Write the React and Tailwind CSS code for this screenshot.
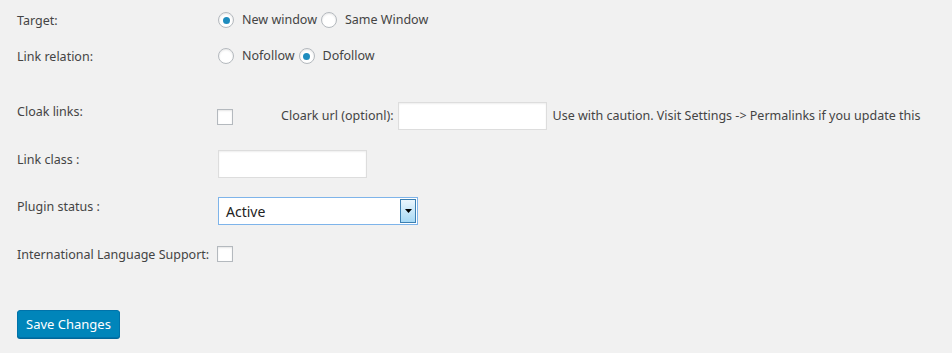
import React from 'react';

const Radio = ({ checked }) => (
  <span className="inline-flex h-4 w-4 items-center justify-center rounded-full border border-[#b4b9be] bg-white shadow-[inset_0_1px_2px_rgba(0,0,0,0.1)]">
    {checked && <span className="h-[7px] w-[7px] rounded-full bg-[#1e8cbe]" />}
  </span>
);

const Checkbox = ({ className = '' }) => (
  <span className={`inline-block h-4 w-4 border border-[#b4b9be] bg-white shadow-[inset_0_1px_2px_rgba(0,0,0,0.1)] ${className}`} />
);

const TextInput = ({ className = '' }) => (
  <div className={`h-[28px] w-[149px] border border-[#ddd] bg-white shadow-[inset_0_1px_2px_rgba(0,0,0,0.07)] ${className}`} />
);

const Row = ({ label, className = '', children }) => (
  <div className={`flex ${className}`}>
    <div className="w-[201px] shrink-0 pt-[1px] leading-[18px]">{label}</div>
    <div className="flex items-center">{children}</div>
  </div>
);

export default function App() {
  return (
    <div className="min-h-[353px] w-[952px] bg-[#f1f1f1] pl-[17px] pt-[11px] text-[12.5px] text-[#444] font-['Segoe_UI','Noto_Sans',sans-serif]">
      <Row label="Target:" className="h-[18px] items-center">
        <label className="flex items-center">
          <Radio checked />
          <span className="ml-[8px] pt-[1px]">New window</span>
        </label>
        <label className="ml-[4px] flex items-center">
          <Radio />
          <span className="ml-[8px] pt-[1px]">Same Window</span>
        </label>
      </Row>

      <Row label="Link relation:" className="mt-[18px] h-[18px] items-center">
        <label className="flex items-center">
          <Radio />
          <span className="ml-[8px] pt-[1px]">Nofollow</span>
        </label>
        <label className="ml-[4px] flex items-center">
          <Radio checked />
          <span className="ml-[8px] pt-[1px]">Dofollow</span>
        </label>
      </Row>

      <Row label="Cloak links:" className="mt-[37px] h-[28px] items-start">
        <div className="flex h-[28px] items-center">
          <Checkbox className="ml-[-1px] mt-[2px]" />
          <span className="ml-[48px] pt-[1px]">Cloark url (optionl):</span>
          <TextInput className="ml-[4px]" />
          <span className="ml-[6px] pt-[1px]">Use with caution. Visit Settings -&gt; Permalinks if you update this</span>
        </div>
      </Row>

      <Row label="Link class :" className="mt-[20px] h-[28px] items-start">
        <TextInput />
      </Row>

      <Row label="Plugin status :" className="mt-[19px] h-[28px] items-start">
        <div className="flex h-[28px] w-[200px] items-center border border-[#7eb4ea] bg-white">
          <span className="flex-1 pl-[7px] text-[14px] text-[#222]">Active</span>
          <span className="mr-[1px] flex h-[24px] w-[16px] items-center justify-center border border-[#3c7fb1] bg-gradient-to-b from-[#eaf6fd] to-[#a7d9f5]">
            <svg width="7" height="4" viewBox="0 0 7 4"><path d="M0 0h7L3.5 4z" fill="#000" /></svg>
          </span>
        </div>
      </Row>

      <Row label="International Language Support:" className="mt-[20px] h-[18px] items-center">
        <Checkbox className="ml-[-1px]" />
      </Row>

      <button className="mt-[47px] h-[28px] rounded-[3px] border border-[#0073aa] bg-[#0085ba] px-[8px] text-[13px] leading-[26px] text-white shadow-[0_1px_0_#006799]">
        Save Changes
      </button>
    </div>
  );
}
